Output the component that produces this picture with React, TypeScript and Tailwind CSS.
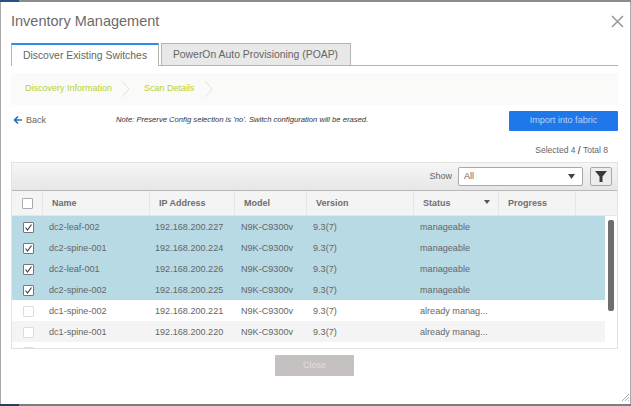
import React from 'react'

interface Row {
  name: string
  ip: string
  status: string
  selected: boolean
}

const rows: Row[] = [
  { name: 'dc2-leaf-002', ip: '192.168.200.227', status: 'manageable', selected: true },
  { name: 'dc2-spine-001', ip: '192.168.200.224', status: 'manageable', selected: true },
  { name: 'dc2-leaf-001', ip: '192.168.200.226', status: 'manageable', selected: true },
  { name: 'dc2-spine-002', ip: '192.168.200.225', status: 'manageable', selected: true },
  { name: 'dc1-spine-002', ip: '192.168.200.221', status: 'already manag...', selected: false },
  { name: 'dc1-spine-001', ip: '192.168.200.220', status: 'already manag...', selected: false },
]

const Chevron = () => (
  <svg width="9" height="18" viewBox="0 0 9 18" className="shrink-0">
    <path d="M1 1l7 8-7 8" fill="none" stroke="#e2e2e0" strokeWidth="1" />
  </svg>
)

const HeaderCell = ({ label, className }: { label: string; className: string }) => (
  <div className={`flex h-full items-center border-r border-[#e6e6e6] pl-[9px] pt-[1px] text-[9px] font-bold text-[#6e6e6e] ${className}`}>
    {label}
  </div>
)

const App: React.FC = () => {
  return (
    <div className="flex h-[406px] w-[631px] flex-col overflow-hidden bg-[#8a8a8a] font-['Liberation_Sans',sans-serif]">
      <div className="flex h-[2px] shrink-0 bg-[#8c8c8c]">
        <div className="h-full w-[19px] bg-[#2a4f86]" />
      </div>
      <div className="relative flex h-[402px] shrink-0 flex-col border-l border-r border-[#a8a8a8] bg-white pl-[10px] pr-[12px]">
        <div className="flex h-[38px] shrink-0 items-center justify-between pt-[1px]">
          <h1 className="text-[14.5px] text-[#6b6b6b]">Inventory Management</h1>
          <svg width="13" height="13" viewBox="0 0 13 13" className="mr-[-6px]">
            <path d="M1 1l11 11M12 1L1 12" stroke="#9a9a9a" strokeWidth="1.6" fill="none" />
          </svg>
        </div>

        <div className="mt-[3px] flex h-[23px] shrink-0 items-end border-b border-[#b4b4b4]">
          <div className="mb-[-1px] flex h-[23px] w-[148px] items-center justify-center whitespace-nowrap border-x border-t-2 border-[#b4b4b4] border-t-[#2e8fea] bg-white text-[10.4px] text-[#666]">
            Discover Existing Switches
          </div>
          <div className="ml-[2px] flex h-[22px] w-[190px] items-center justify-center whitespace-nowrap border-x border-t border-[#b4b4b4] bg-[#e8e8e8] pr-[1px] text-[10.4px] text-[#666]">
            PowerOn Auto Provisioning (POAP)
          </div>
        </div>

        <div className="mt-[7px] flex h-[32px] shrink-0 items-center gap-[9px] bg-[#fafaf8] pl-[14px] text-[9px] text-[#b5d334]">
          <span>Discovery Information</span>
          <Chevron />
          <span className="ml-[5px]">Scan Details</span>
          <Chevron />
        </div>

        <div className="mt-[6px] flex h-[20px] shrink-0 items-center">
          <svg width="10" height="10" viewBox="0 0 10 10" className="ml-[2px] mt-[-3px]">
            <path d="M9 5H2M5 1.5L1.5 5 5 8.5" stroke="#2a72b5" strokeWidth="1.7" fill="none" />
          </svg>
          <span className="ml-[3px] text-[9px] text-[#666]">Back</span>
          <span className="ml-[70px] mt-[-2px] w-[283px] text-[7.65px] italic text-[#333]">
            Note: Preserve Config selection is 'no'. Switch configuration will be erased.
          </span>
          <button className="ml-auto h-[20px] w-[109px] rounded-[1px] bg-[#1f77ea] text-[9.1px] text-[#b9d3f5]">
            Import into fabric
          </button>
        </div>

        <div className="mt-[12px] flex h-[15px] shrink-0 items-center justify-end pr-[10px] text-[8.5px] text-[#666]">
          Selected 4&nbsp;<span className="text-[10px] text-[#333]">/</span>&nbsp;Total 8
        </div>

        <div className="mt-[4px] flex h-[187px] shrink-0 flex-col overflow-hidden border border-[#e2e2e2]">
          <div className="flex h-[28px] shrink-0 items-center justify-end border-b border-[#b8b8b8] bg-gradient-to-b from-[#f6f6f6] to-[#e6e6e6] pr-[5px]">
            <span className="text-[9px] text-[#666]">Show</span>
            <div className="ml-[6px] flex h-[19px] w-[125px] items-center justify-between rounded-[2px] border border-[#a8a8a8] bg-white pl-[5px] pr-[7px] text-[9px] text-[#666]">
              All
              <svg width="7" height="5" viewBox="0 0 7 5">
                <path d="M0 0h7L3.5 5z" fill="#444" />
              </svg>
            </div>
            <div className="ml-[7px] flex h-[19px] w-[22px] items-center justify-center rounded-[2px] border border-[#a8a8a8] bg-[#ececec]">
              <svg width="12" height="11" viewBox="0 0 12 11">
                <path d="M0 0h12L7.5 5.5V11h-3V5.5z" fill="#3a3a3a" />
              </svg>
            </div>
          </div>

          <div className="flex h-[25px] shrink-0 items-center border-b border-[#e6e6e6] bg-[#f4f4f4]">
            <div className="flex h-full w-[31px] shrink-0 items-center justify-center border-r border-[#e6e6e6] pl-[1px]">
              <div className="size-[11px] rounded-[1px] border border-[#aaa] bg-white" />
            </div>
            <HeaderCell label="Name" className="w-[107px]" />
            <HeaderCell label="IP Address" className="w-[85px]" />
            <HeaderCell label="Model" className="w-[72px]" />
            <HeaderCell label="Version" className="w-[107px]" />
            <div className="relative h-full">
              <HeaderCell label="Status" className="w-[85px]" />
              <svg width="6" height="4" viewBox="0 0 6 4" className="absolute right-[9px] top-[9px]">
                <path d="M0 0h6L3 4z" fill="#555" />
              </svg>
            </div>
            <HeaderCell label="Progress" className="w-[77px]" />
          </div>

          <div className="relative flex-1 overflow-hidden text-[9.1px] text-[#666]">
            {rows.map((row, i) => (
              <div
                key={row.name}
                className={`flex h-[21px] w-[593px] items-center pt-[2px] ${row.selected ? 'bg-[#b8dae5]' : i % 2 === 0 ? 'bg-white' : 'bg-[#f4f4f4]'}`}
              >
                <div className="flex w-[31px] shrink-0 justify-center pl-[1px]">
                  {row.selected ? (
                    <div className="flex size-[11px] items-center justify-center rounded-[1px] border border-[#777] bg-white">
                      <svg width="9" height="9" viewBox="0 0 9 9">
                        <path d="M1.5 4.5l2 2.5 4-5.5" stroke="#444" strokeWidth="1.2" fill="none" />
                      </svg>
                    </div>
                  ) : (
                    <div className="size-[11px] rounded-[1px] border border-[#ddd] bg-white" />
                  )}
                </div>
                <div className="w-[107px] shrink-0 pl-[6px]">{row.name}</div>
                <div className="w-[85px] shrink-0 pl-[5px]">{row.ip}</div>
                <div className="w-[72px] shrink-0 pl-[6px]">N9K-C9300v</div>
                <div className="w-[107px] shrink-0 pl-[6px]">9.3(7)</div>
                <div className="w-[85px] shrink-0 pl-[6px]">{row.status}</div>
              </div>
            ))}
            <div className="flex h-[21px] w-[593px] items-center">
              <div className="flex w-[31px] justify-center pl-[1px]">
                <div className="size-[11px] rounded-[1px] border border-[#ddd] bg-white" />
              </div>
            </div>
            <div className="absolute right-[3px] top-[4px] h-[91px] w-[6px] rounded-[2px] bg-[#6e6e6e]" />
          </div>
        </div>

        <div className="mt-[6px] flex shrink-0 justify-center">
          <button className="h-[21px] w-[79px] rounded-[1px] bg-[#c6c1c1] text-[9px] text-[#e2dfdf]">Close</button>
        </div>

        <svg width="7" height="7" viewBox="0 0 7 7" className="absolute bottom-[3px] right-[1px]">
          <path d="M0 7l7-7M3 7l4-4M6 7l1-1" stroke="#aaa" strokeWidth="1" fill="none" />
        </svg>
      </div>
      <div className="flex h-[2px] shrink-0 bg-[#7d7d7d]">
        <div className="h-full w-[19px] bg-[#2a3d5c]" />
      </div>
    </div>
  )
}

export default App
